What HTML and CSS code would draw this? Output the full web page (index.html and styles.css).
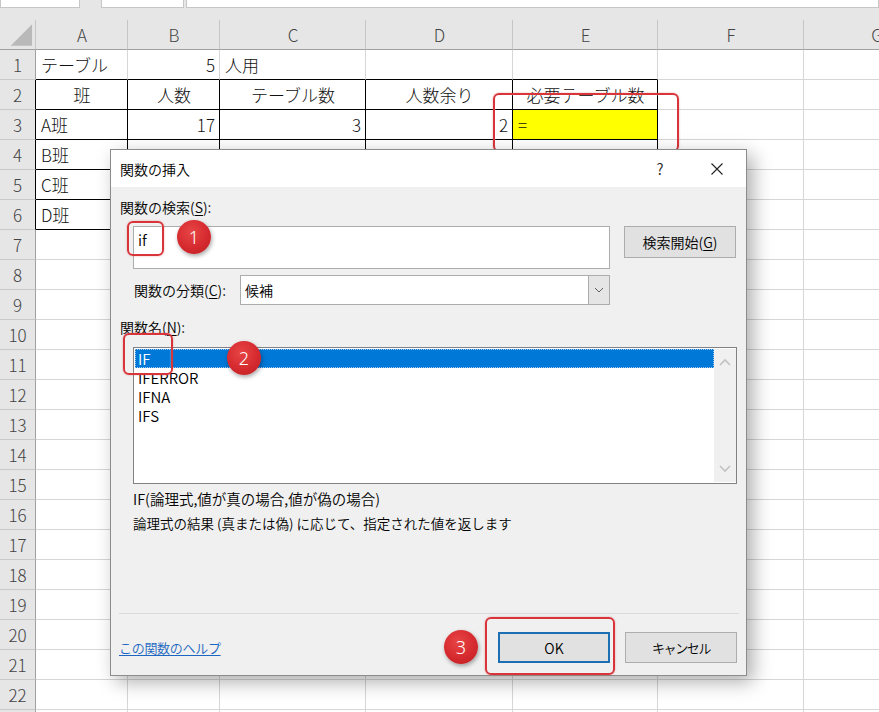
FILE: index.html
```html
<!DOCTYPE html>
<html lang="ja">
<head>
<meta charset="utf-8">
<title>関数の挿入</title>
<link rel="stylesheet" href="styles.css">
</head>
<body>
<div class="app">
  <div class="strip"><span class="tab t1"></span><span class="tab t2"></span><span class="tab t3"></span></div>
  <div class="sheet">
    <div class="ch corner"><svg width="36" height="30" viewBox="0 0 36 30"><polygon points="11,26 33,26 33,4" fill="#b9b9b9"/></svg></div>
    <div class="ch">A</div><div class="ch">B</div><div class="ch">C</div><div class="ch">D</div><div class="ch">E</div><div class="ch">F</div><div class="ch">G</div>

    <div class="rh">1</div><div class="tt">テーブル</div><div class="tt r">5</div><div class="tt">人用</div><div class="tt"></div><div class="tt"></div><div></div><div></div>
    <div class="rh rb">2</div><div class="tb ctr">班</div><div class="tb ctr">人数</div><div class="tb ctr">テーブル数</div><div class="tb ctr">人数余り</div><div class="tb ctr">必要テーブル数</div><div></div><div></div>
    <div class="rh rb">3</div><div class="tb">A班</div><div class="tb r">17</div><div class="tb r">3</div><div class="tb r">2</div><div class="tb y">=</div><div></div><div></div>
    <div class="rh rb">4</div><div class="tb">B班</div><div class="tb r">10</div><div class="tb r">2</div><div class="tb r">0</div><div class="tb"></div><div></div><div></div>
    <div class="rh rb">5</div><div class="tb">C班</div><div class="tb r"></div><div class="tb r"></div><div class="tb r"></div><div class="tb"></div><div></div><div></div>
    <div class="rh rb">6</div><div class="tb">D班</div><div class="tb r"></div><div class="tb r"></div><div class="tb r"></div><div class="tb"></div><div></div><div></div>
    <div class="rh">7</div><div></div><div></div><div></div><div></div><div></div><div></div><div></div>
    <div class="rh">8</div><div></div><div></div><div></div><div></div><div></div><div></div><div></div>
    <div class="rh">9</div><div></div><div></div><div></div><div></div><div></div><div></div><div></div>
    <div class="rh">10</div><div></div><div></div><div></div><div></div><div></div><div></div><div></div>
    <div class="rh">11</div><div></div><div></div><div></div><div></div><div></div><div></div><div></div>
    <div class="rh">12</div><div></div><div></div><div></div><div></div><div></div><div></div><div></div>
    <div class="rh">13</div><div></div><div></div><div></div><div></div><div></div><div></div><div></div>
    <div class="rh">14</div><div></div><div></div><div></div><div></div><div></div><div></div><div></div>
    <div class="rh">15</div><div></div><div></div><div></div><div></div><div></div><div></div><div></div>
    <div class="rh">16</div><div></div><div></div><div></div><div></div><div></div><div></div><div></div>
    <div class="rh">17</div><div></div><div></div><div></div><div></div><div></div><div></div><div></div>
    <div class="rh">18</div><div></div><div></div><div></div><div></div><div></div><div></div><div></div>
    <div class="rh">19</div><div></div><div></div><div></div><div></div><div></div><div></div><div></div>
    <div class="rh">20</div><div></div><div></div><div></div><div></div><div></div><div></div><div></div>
    <div class="rh">21</div><div></div><div></div><div></div><div></div><div></div><div></div><div></div>
    <div class="rh">22</div><div></div><div></div><div></div><div></div><div></div><div></div><div></div>
    <div class="rh"></div><div></div><div></div><div></div><div></div><div></div><div></div><div></div>
  </div>

  <div class="mark m-e3"></div>

  <div class="dialog">
    <div class="titlebar">
      <span class="title">関数の挿入</span>
      <span class="help">?</span>
      <svg class="close" width="12" height="12" viewBox="0 0 12 12"><path d="M0.5 0.5 L11.5 11.5 M11.5 0.5 L0.5 11.5" stroke="#222" stroke-width="1.1" fill="none"/></svg>
    </div>
    <div class="body">
      <div class="lbl lbl1">関数の検索(<u>S</u>):</div>
      <div class="searchrow">
        <div class="search">if</div>
        <div class="btn btn-search">検索開始(<u>G</u>)</div>
      </div>
      <div class="catrow">
        <span class="catlbl">関数の分類(<u>C</u>):</span>
        <div class="select">
          <span class="seltext">候補</span>
          <span class="selarrow"><svg width="10" height="6" viewBox="0 0 10 6"><path d="M1 1 L5 5 L9 1" stroke="#606060" stroke-width="1" fill="none"/></svg></span>
        </div>
      </div>
      <div class="lbl lbl2">関数名(<u>N</u>):</div>
      <div class="list">
        <div class="items">
          <div class="item sel">IF</div>
          <div class="item">IFERROR</div>
          <div class="item">IFNA</div>
          <div class="item">IFS</div>
        </div>
        <div class="scroll">
          <svg width="12" height="8" viewBox="0 0 12 8"><path d="M1 7 L6 2 L11 7" stroke="#c2c2c2" stroke-width="1.6" fill="none"/></svg>
          <svg width="12" height="8" viewBox="0 0 12 8"><path d="M1 1 L6 6 L11 1" stroke="#c2c2c2" stroke-width="1.6" fill="none"/></svg>
        </div>
      </div>
      <div class="desc">
        <div class="d1">IF(論理式,値が真の場合,値が偽の場合)</div>
        <div class="d2">論理式の結果 (真または偽) に応じて、指定された値を返します</div>
      </div>
      <div class="sep"></div>
      <div class="footer">
        <a class="link">この関数のヘルプ</a>
        <div class="btn btn-ok">OK</div>
        <div class="btn btn-cancel"><span class="kana">キャンセル</span></div>
      </div>
    </div>
  </div>

  <div class="mark m-if"></div>
  <div class="mark m-IF"></div>
  <div class="mark m-ok"></div>
  <div class="num n1">1</div>
  <div class="num n2">2</div>
  <div class="num n3">3</div>
</div>
</body>
</html>
```

FILE: styles.css
```css
* { box-sizing: border-box; }
html, body { margin: 0; padding: 0; }
body {
  font-family: "Noto Sans CJK JP", "Noto Sans", sans-serif;
  background: #fff;
  overflow: hidden;
}
.app {
  position: relative;
  width: 879px;
  height: 712px;
  overflow: hidden;
}

/* top strip */
.strip {
  height: 20px;
  background: #e6e6e6;
  display: flex;
  align-items: flex-start;
}
.tab {
  height: 8px;
  background: #fff;
  border: 1px solid #c6c6c6;
  border-top: 0;
}
.t1 { width: 80px; }
.t2 { width: 83px; margin-left: 21px; }
.t3 { flex: 1; margin-left: 2px; }

/* sheet */
.sheet {
  display: grid;
  grid-template-columns: 36px 92px 92px 146px 147px 145px 146px 146px;
  grid-auto-rows: 30px;
  font-size: 17px;
  font-weight: 300;
  color: #111;
  width: 950px;
}
.sheet > div {
  border-right: 1px solid #d6d6d6;
  border-bottom: 1px solid #d6d6d6;
  display: flex;
  align-items: center;
  padding: 0 4px 0 5px;
  white-space: nowrap;
  overflow: hidden;
}
.sheet > .ch {
  background: #e6e6e6;
  justify-content: center;
  color: #444;
  font-size: 17px;
  border-right-color: #c6c6c6;
  border-bottom-color: #a0a0a0;
}
.sheet > .corner { padding: 0; }
.sheet > .rh {
  background: #e6e6e6;
  justify-content: center;
  color: #444;
  font-size: 17px;
  padding: 0;
  border-right-color: #a0a0a0;
  border-bottom-color: #c9c9c9;
}
.sheet > .rb { border-right-color: #000; }
.sheet > .tt { border-bottom-color: #000; }
.sheet > .tb { border-right-color: #000; border-bottom-color: #000; }
.sheet > .r { justify-content: flex-end; }
.sheet > .ctr { justify-content: center; }
.sheet > .y { background: #ffff00; }

/* annotations */
.mark {
  position: absolute;
  border: 2px solid #d8353b;
  border-radius: 6px;
  box-shadow: 0 0 2px rgba(216, 53, 59, 0.45), inset 0 0 2px rgba(255, 255, 255, 0.6);
}
.m-e3 { left: 493px; top: 93px; width: 186px; height: 59px; }
.m-if { left: 127px; top: 221px; width: 37px; height: 35px; }
.m-IF { left: 123px; top: 333px; width: 50px; height: 42px; }
.m-ok { left: 485px; top: 617px; width: 130px; height: 58px; }

.num {
  position: absolute;
  width: 34px;
  height: 34px;
  border-radius: 50%;
  background: radial-gradient(circle at 42% 35%, #e84545 0%, #d52a2f 55%, #bb1d22 100%);
  color: #fff;
  font-family: "Noto Sans", sans-serif;
  font-weight: 300;
  font-size: 18px;
  display: flex;
  align-items: center;
  justify-content: center;
  box-shadow: 1px 2px 4px rgba(0, 0, 0, 0.35);
}
.n1 { left: 177px; top: 220px; }
.n2 { left: 227px; top: 341px; }
.n3 { left: 444px; top: 630px; }

/* dialog */
.dialog {
  position: absolute;
  left: 110px;
  top: 149px;
  width: 637px;
  height: 527px;
  border: 1px solid #8c8c8c;
  background: #f0f0f0;
  box-shadow: 6px 6px 18px rgba(0, 0, 0, 0.32);
  display: flex;
  flex-direction: column;
  font-size: 14px;
  font-weight: 350;
  color: #000;
}
.titlebar {
  height: 37px;
  background: #fff;
  display: flex;
  align-items: center;
  padding-left: 9px;
  flex-shrink: 0;
}
.title { flex: 1; }
.help {
  width: 20px;
  text-align: center;
  font-size: 15px;
  color: #222;
}
.close { margin-left: 41px; margin-right: 23px; }

.body {
  padding: 0 9px 0 8px;
  display: flex;
  flex-direction: column;
}
.lbl {
  line-height: 20px;
  padding-left: 1px;
}
.lbl1 { margin-top: 10px; }
.lbl2 { margin-top: 12px; }
u { text-decoration-thickness: 1px; text-underline-offset: 2px; }

.searchrow {
  display: flex;
  margin-top: 9px;
  padding-left: 14px;
  align-items: flex-start;
}
.search {
  width: 477px;
  height: 43px;
  background: #fff;
  border: 1px solid #acacac;
  padding: 3px 4px;
  line-height: 20px;
  font-size: 15px;
}
.btn {
  background: #e1e1e1;
  border: 1px solid #adadad;
  display: flex;
  align-items: center;
  justify-content: center;
  width: 112px;
}
.btn-search { height: 32px; margin-left: 14px; }

.catrow {
  display: flex;
  align-items: center;
  margin-top: 6px;
  padding-left: 15px;
}
.catlbl { width: 106px; }
.select {
  width: 370px;
  height: 30px;
  background: #fff;
  border: 1px solid #acacac;
  display: flex;
}
.seltext {
  flex: 1;
  padding-left: 4px;
  display: flex;
  align-items: center;
}
.selarrow {
  width: 21px;
  background: #e5e5e5;
  border-left: 1px solid #acacac;
  display: flex;
  align-items: center;
  justify-content: center;
}

.list {
  margin-top: 10px;
  margin-left: 14px;
  width: 604px;
  height: 137px;
  border: 1px solid #828282;
  background: #fff;
  display: flex;
  padding: 1px 0 1px 1px;
}
.items { flex: 1; }
.item {
  height: 19px;
  line-height: 19px;
  padding-left: 3px;
  font-size: 15px;
}
.item.sel {
  background: #0078d7;
  color: #fff;
  outline: 1px dotted #9cc7ee;
  outline-offset: -1px;
}
.scroll {
  width: 22px;
  background: #f0f0f0;
  display: flex;
  flex-direction: column;
  justify-content: space-between;
  align-items: center;
  padding: 9px 0 9px;
}

.desc {
  margin-top: 2px;
  padding-left: 14px;
  line-height: 25px;
}
.d1 { font-size: 14.5px; }
.d2 { font-size: 13.5px; }
.sep {
  margin-top: 77px;
  margin-right: -2px;
  border-top: 1px solid #dadada;
}
.footer {
  display: flex;
  align-items: center;
  margin-top: 18px;
}
.link {
  flex: 1;
  color: #1a66c0;
  text-decoration: underline;
  text-underline-offset: 2px;
  font-size: 13px;
  letter-spacing: -0.3px;
}
.btn-ok {
  height: 31px;
  border: 2px solid #1b6fb2;
}
.btn-cancel {
  height: 31px;
  margin-left: 15px;
}
.kana {
  font-size: 13px;
  letter-spacing: -1.4px;
}
```
